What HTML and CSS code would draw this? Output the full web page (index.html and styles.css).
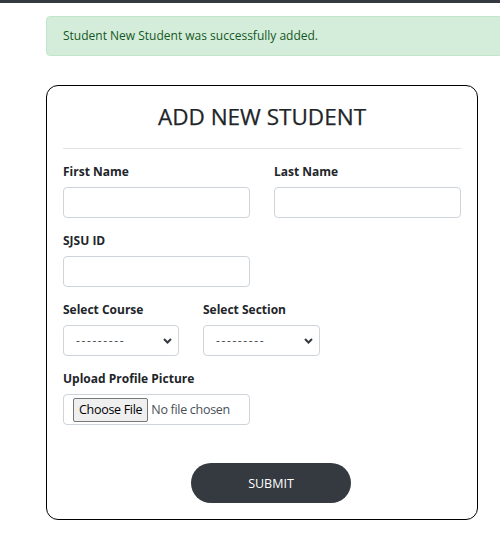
FILE: index.html
```html
<!DOCTYPE html>
<html>
<head>
<meta charset="utf-8">
<link rel="stylesheet" href="styles.css">
</head>
<body>
<div class="topbar"></div>
<main class="page">
  <div class="alert">Student New Student was successfully added.</div>
  <form class="card">
    <h2 class="title">ADD NEW STUDENT</h2>
    <hr class="rule">
    <div class="row">
      <div class="field">
        <label class="label">First Name</label>
        <input class="control" type="text">
      </div>
      <div class="field">
        <label class="label">Last Name</label>
        <input class="control" type="text">
      </div>
    </div>
    <div class="row">
      <div class="field">
        <label class="label">SJSU ID</label>
        <input class="control" type="text">
      </div>
    </div>
    <div class="row selects">
      <div class="field">
        <label class="label">Select Course</label>
        <select class="select course"><option>---------</option></select>
      </div>
      <div class="field">
        <label class="label">Select Section</label>
        <select class="select section"><option>---------</option></select>
      </div>
    </div>
    <div class="row">
      <div class="field">
        <label class="label">Upload Profile Picture</label>
        <div class="control filebox"><span class="filebtn">Choose File</span><span class="filetext">No file chosen</span></div>
      </div>
    </div>
    <div class="actions">
      <button class="submit" type="button">SUBMIT</button>
    </div>
  </form>
</main>
</body>
</html>
```
FILE: styles.css
```css
* { box-sizing: border-box; }
html, body { margin: 0; padding: 0; background: #fff; }
body {
  font-family: "Open Sans", "Noto Sans", sans-serif;
  color: #212529;
  width: 500px;
  overflow: hidden;
}
.topbar { height: 3px; background: #343a40; }
.page { padding: 13px 0 0 46px; overflow: hidden; }
.alert {
  width: 480px;
  height: 40px;
  background: #d4edda;
  border: 1px solid #c3e6cb;
  border-radius: 4px;
  color: #155724;
  font-size: 12px;
  line-height: 20px;
  padding: 9px 16px;
}
.card {
  margin-top: 29px;
  width: 432px;
  height: 435px;
  border: 1px solid #000;
  border-radius: 12px;
  padding: 16px 16px 0 16px;
}
.title {
  margin: 0;
  text-align: center;
  font-weight: 500;
  font-size: 22.5px;
  line-height: 29px;
  color: #212529;
  -webkit-text-stroke: 0.25px #212529;
}
.rule {
  margin: 17px 0 13px 0;
  border: 0;
  border-top: 1px solid #e3e3e3;
  height: 0;
}
.row {
  display: flex;
  gap: 24px;
  margin-bottom: 13px;
}
.field { display: flex; flex-direction: column; width: 187px; }
.label {
  font-weight: 700;
  font-size: 12px;
  line-height: 20px;
  margin-bottom: 5px;
}
.control {
  height: 31px;
  border: 1px solid #ced4da;
  border-radius: 4px;
  background: #fff;
  width: 187px;
  font-family: inherit;
}
.selects .field:first-child { width: 116px; }
.selects .field:last-child { width: 117px; }
.select {
  appearance: none;
  -webkit-appearance: none;
  height: 31px;
  border: 1px solid #ced4da;
  border-radius: 4px;
  padding: 0 24px 0 12px;
  font-family: inherit;
  font-size: 12px;
  letter-spacing: 1.6px;
  color: #495057;
  background: #fff url("data:image/svg+xml;utf8,<svg xmlns='http://www.w3.org/2000/svg' width='9' height='6' viewBox='0 0 9 6'><path d='M1 1l3.5 3.5L8 1' fill='none' stroke='%23343a40' stroke-width='2'/></svg>") no-repeat right 6px center;
}
.select.course { width: 116px; }
.select.section { width: 117px; }
.filebox {
  display: flex;
  align-items: center;
  padding: 0 0 0 9px;
  font-size: 12.5px;
}
.filebtn {
  height: 24px;
  line-height: 22px;
  padding: 0 5px;
  border: 1px solid #767676;
  border-radius: 2px;
  background: #efefef;
  color: #000;
  margin-right: 3px;
  letter-spacing: -0.3px;
}
.filetext { color: #495057; letter-spacing: -0.3px; }
.actions {
  display: flex;
  justify-content: center;
  margin-top: 38px;
  padding-left: 18px;
}
.submit {
  width: 160px;
  height: 40px;
  border: 0;
  border-radius: 20px;
  background: #343a40;
  color: #fff;
  font-family: inherit;
  font-size: 12.5px;
}
```
